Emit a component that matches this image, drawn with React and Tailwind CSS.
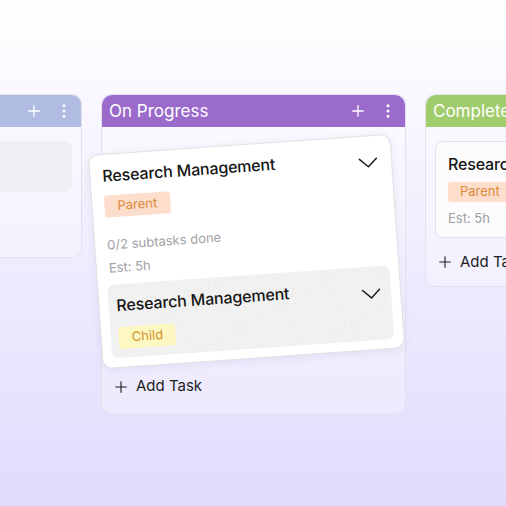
import { Plus, EllipsisVertical } from "lucide-react";

function Chevron() {
  return (
    <svg width="20" height="11" viewBox="0 0 20 11" fill="none" className="shrink-0">
      <path d="M1.5 1.5 L10 9.5 L18.5 1.5" stroke="#1c1c1c" strokeWidth="1.5" strokeLinecap="round" strokeLinejoin="round" />
    </svg>
  );
}

function ColumnHeader({ title, color }) {
  return (
    <div className={`flex h-[32px] items-center justify-between pl-[7px] pr-[8px] ${color}`}>
      <span className="text-[17px] leading-none text-white whitespace-nowrap">{title}</span>
      <div className="flex items-center gap-[12px] text-white">
        <Plus size={18} strokeWidth={1.75} />
        <EllipsisVertical size={18} strokeWidth={2} />
      </div>
    </div>
  );
}

function AddTask({ className }) {
  return (
    <div className={`flex h-[28px] items-center gap-[6px] pl-[1px] text-[15px] text-[#1d1d1f] ${className}`}>
      <Plus size={18} strokeWidth={1.5} />
      <span>Add Task</span>
    </div>
  );
}

function Tag({ children, tone }) {
  return (
    <span className={`inline-flex h-[22px] items-center rounded-[3px] px-[13px] text-[13px] ${tone}`}>
      {children}
    </span>
  );
}

export default function App() {
  return (
    <div className="h-[506px] w-[506px] overflow-hidden bg-linear-to-b from-white to-[#e2dafd] font-['Inter',sans-serif]">
      <div className="ml-[-223px] flex items-start gap-[19px] pt-[94px]">
        {/* To do column, mostly off screen */}
        <div className="w-[305px] shrink-0 overflow-hidden rounded-[10px] border border-[#e4e1ef] bg-white/30">
          <ColumnHeader title="To Do" color="bg-[#b1bce3]" />
          <div className="h-[130px] px-[9px] pt-[14px]">
            <div className="h-[51px] rounded-[8px] bg-[#efeef4]" />
          </div>
        </div>

        {/* On Progress column */}
        <div className="w-[305px] shrink-0 rounded-[10px] border border-[#e4e1ef] bg-white/30">
          <div className="overflow-hidden rounded-t-[10px]">
            <ColumnHeader title="On Progress" color="bg-[#9a6bca]" />
          </div>
          <div className="px-[9px] pb-[12px] pt-[17px]">
            <div className="ml-[-16px] w-[303px] -rotate-[4deg] rounded-[10px] border border-[#e1e1e4] bg-white px-[12px] pb-[9px] pt-[9px] shadow-[0_2px_8px_rgba(60,40,120,0.08)]">
              <div className="flex items-start justify-between">
                <span className="text-[16px] font-medium leading-[24px] tracking-[-0.01em] text-[#161616]">Research Management</span>
                <div className="mr-[1px] mt-[12px]">
                  <Chevron />
                </div>
              </div>
              <div className="mt-[5px]">
                <Tag tone="bg-[#fdddcb] text-[#d98a3a]">Parent</Tag>
              </div>
              <p className="mt-[17px] text-[13px] leading-[20px] text-[#a0a0a6]">0/2 subtasks done</p>
              <p className="mt-[3px] text-[13px] leading-[20px] text-[#a0a0a6]">Est: 5h</p>
              <div className="mx-[-3px] mt-[7px] rounded-[8px] bg-[#f1f1f2] bg-[radial-gradient(#e2e2e4_0.7px,transparent_0.8px)] bg-size-[7px_7px] pb-[9px] pl-[8px] pr-[10px] pt-[9px]">
                <div className="flex items-start justify-between">
                  <span className="text-[16px] font-medium leading-[24px] tracking-[-0.01em] text-[#161616]">Research Management</span>
                  <div className="mt-[13px]">
                    <Chevron />
                  </div>
                </div>
                <div className="mt-[7px]">
                  <Tag tone="bg-[#fdf7c2] text-[#d3902e]">Child</Tag>
                </div>
              </div>
            </div>
            <AddTask className="mt-[14px]" />
          </div>
        </div>

        {/* Completed column */}
        <div className="w-[305px] shrink-0 rounded-[10px] border border-[#e4e1ef] bg-white/30">
          <div className="overflow-hidden rounded-t-[10px]">
            <ColumnHeader title="Completed" color="bg-[#a1cc6c]" />
          </div>
          <div className="px-[9px] pb-[10px] pt-[14px]">
            <div className="rounded-[8px] border border-[#e3e2e8] bg-[#fcfcfd] px-[12px] pb-[10px] pt-[10px]">
              <p className="text-[16px] font-medium leading-[24px] tracking-[-0.01em] text-[#161616]">Research Management</p>
              <div className="mt-[2px]">
                <span className="inline-flex h-[20px] items-center rounded-[3px] px-[12px] text-[13px] bg-[#fdddcb] text-[#d98a3a]">Parent</span>
              </div>
              <p className="mt-[7px] text-[13px] leading-[18px] text-[#a0a0a6]">Est: 5h</p>
            </div>
            <AddTask className="mt-[10px]" />
          </div>
        </div>
      </div>
    </div>
  );
}
